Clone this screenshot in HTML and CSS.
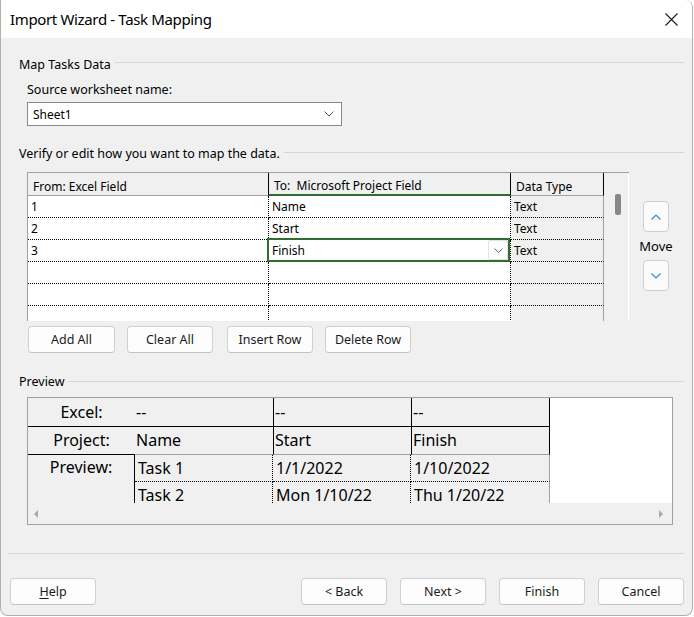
FILE: index.html
```html
<!DOCTYPE html>
<html>
<head>
<meta charset="utf-8">
<title>Import Wizard - Task Mapping</title>
<link rel="stylesheet" href="styles.css">
</head>
<body>
<div class="window">
  <div class="titlebar">
    <span class="title">Import Wizard - Task Mapping</span>
    <svg class="close" width="13" height="13" viewBox="0 0 13 13"><path d="M0.5 0.5L12.5 12.5M12.5 0.5L0.5 12.5" stroke="#1a1a1a" stroke-width="1.1" fill="none"/></svg>
  </div>

  <div class="content">
    <div class="group-head g-map"><span class="gh-text">Map Tasks Data</span><div class="rule"></div></div>
    <div class="indent">
      <div class="field-label">Source worksheet name:</div>
      <div class="combo">
        <span>Sheet1</span>
        <svg class="combo-chev" width="10" height="6" viewBox="0 0 10 6"><path d="M0.5 0.5L5 5L9.5 0.5" stroke="#555" stroke-width="1" fill="none"/></svg>
      </div>
    </div>

    <div class="group-head g-verify"><span class="gh-text">Verify or edit how you want to map the data.</span><div class="rule"></div></div>

    <div class="map-row">
      <div class="grid">
        <div class="grid-table">
          <div class="row head">
            <div class="c c1">From: Excel Field</div>
            <div class="c c2 sel-col">To:&nbsp; Microsoft Project Field</div>
            <div class="c c3">Data Type</div>
          </div>
          <div class="row">
            <div class="c c1">1</div>
            <div class="c c2">Name</div>
            <div class="c c3">Text</div>
          </div>
          <div class="row">
            <div class="c c1">2</div>
            <div class="c c2">Start</div>
            <div class="c c3">Text</div>
          </div>
          <div class="row">
            <div class="c c1">3</div>
            <div class="c c2 active">Finish
              <span class="cell-drop"><svg width="9" height="5" viewBox="0 0 9 5"><path d="M0.5 0.5L4.5 4.5L8.5 0.5" stroke="#666" stroke-width="1" fill="none"/></svg></span>
            </div>
            <div class="c c3">Text</div>
          </div>
          <div class="row"><div class="c c1"></div><div class="c c2"></div><div class="c c3"></div></div>
          <div class="row"><div class="c c1"></div><div class="c c2"></div><div class="c c3"></div></div>
          <div class="row"><div class="c c1"></div><div class="c c2"></div><div class="c c3"></div></div>
        </div>
        <div class="vscroll"><div class="thumb"></div></div>
      </div>
      <div class="move">
        <button class="move-btn up"><svg width="10" height="6" viewBox="0 0 10 6"><path d="M0.5 5.5L5 1L9.5 5.5" stroke="#2f88d8" stroke-width="1.2" fill="none"/></svg></button>
        <div class="move-label">Move</div>
        <button class="move-btn down"><svg width="10" height="6" viewBox="0 0 10 6"><path d="M0.5 0.5L5 5L9.5 0.5" stroke="#2f88d8" stroke-width="1.2" fill="none"/></svg></button>
      </div>
    </div>

    <div class="grid-buttons">
      <button class="btn">Add All</button>
      <button class="btn">Clear All</button>
      <button class="btn">Insert Row</button>
      <button class="btn">Delete Row</button>
    </div>

    <div class="group-head g-preview"><span class="gh-text">Preview</span><div class="rule"></div></div>

    <div class="preview">
      <div class="pv-area">
        <div class="pv-table">
          <div class="pv lbl r-ex">Excel:</div>
          <div class="pv v r-ex">--</div>
          <div class="pv v r-ex b-l">--</div>
          <div class="pv v r-ex b-l last">--</div>

          <div class="pv lbl r-pj lbl-pj">Project:</div>
          <div class="pv v r-pj">Name</div>
          <div class="pv v r-pj b-l">Start</div>
          <div class="pv v r-pj b-l last">Finish</div>

          <div class="pv lbl r-pv">Preview:</div>
          <div class="pv t t1 d-r">Task 1</div>
          <div class="pv t t1 d-r">1/1/2022</div>
          <div class="pv t t1 g-r">1/10/2022</div>
          <div class="pv t t2 d-r">Task 2</div>
          <div class="pv t t2 d-r">Mon 1/10/22</div>
          <div class="pv t t2 g-r">Thu 1/20/22</div>
        </div>
        <div class="pv-blank"></div>
      </div>
      <div class="hscroll">
        <span class="arr-left"></span>
        <span class="arr-right"></span>
      </div>
    </div>
  </div>

  <div class="footer">
    <div class="footer-rule"></div>
    <div class="footer-buttons">
      <button class="btn fbtn"><u>H</u>elp</button>
      <div class="nav">
        <button class="btn fbtn">&lt; Back</button>
        <button class="btn fbtn">Next &gt;</button>
        <button class="btn fbtn">Finish</button>
        <button class="btn fbtn">Cancel</button>
      </div>
    </div>
  </div>
</div>
</body>
</html>
```

FILE: styles.css
```css
* { box-sizing: border-box; }
html, body { margin: 0; padding: 0; }
body {
  width: 694px;
  height: 617px;
  overflow: hidden;
  background: #ffffff;
  font-family: "Noto Sans", "Open Sans", sans-serif;
  font-size: 12px;
  color: #000;
}
.window {
  width: 693px;
  height: 616px;
  background: #f0f0f0;
  border: 1px solid #b0b0b0;
  border-top: none;
  border-radius: 0 8px 8px 8px;
  overflow: hidden;
}
.titlebar {
  height: 38px;
  background: #fff;
  display: flex;
  align-items: center;
  justify-content: space-between;
  padding: 0 14px 0 9px;
}
.title { font-size: 15px; line-height: 20px; letter-spacing: -0.35px; }
.close { display: block; }

.content { padding: 0 8px 0 18px; }

.group-head { display: flex; height: 18px; line-height: 18px; font-size: 12.5px; }
.gh-text { white-space: nowrap; }
.rule { flex: 1; height: 1px; background: #d6d6d6; margin: 6px 0 0 4px; }
.g-map { margin-top: 18px; }
.g-verify { margin-top: 19px; }
.g-verify .rule { margin-top: 7px; }
.g-preview { margin-top: 20px; }
.g-preview .rule { margin-top: 8px; }

.indent { padding-left: 8px; }
.field-label { margin-top: 7px; height: 18px; line-height: 18px; font-size: 12.5px; }
.combo {
  margin-top: 3px;
  width: 315px;
  height: 24px;
  background: #fff;
  border: 1px solid #8a8a8a;
  display: flex;
  align-items: center;
  justify-content: space-between;
  padding: 0 7px 0 5px;
}
.combo-chev { display: block; }

.map-row { display: flex; margin-top: 9px; margin-left: 8px; }
.grid {
  display: flex;
  height: 149px;
  border-top: 1px solid #a0a0a0;
  border-left: 1px solid #a0a0a0;
  overflow: hidden;
  background: #fff;
}
.grid-table { width: 576px; }
.row { display: flex; height: 22px; }
.row .c {
  height: 22px;
  line-height: 21px;
  padding-left: 3px;
  border-right: 1px dotted #000;
  border-bottom: 1px dotted #000;
  white-space: nowrap;
}
.c1 { width: 241px; }
.c2 { width: 242px; position: relative; }
.row .c3 { width: 93px; background: #f0f0f0; border-right: 1px solid #a0a0a0; }
.row.head { height: 23px; }
.row.head .c {
  height: 23px;
  line-height: 27px;
  padding-left: 5px;
  background: #f0f0f0;
  border-right: 1px solid #000;
  border-bottom: 1px solid #a0a0a0;
  overflow: hidden;
}
.row.head .c3 { border-right: 1px solid #000; }
.row.head .sel-col { border-bottom: 2px solid #2e6e31; line-height: 26px; }
.active::after {
  content: "";
  position: absolute;
  top: -2px;
  left: -2px;
  right: 0;
  bottom: -1px;
  border: 2px solid #2e6e31;
  pointer-events: none;
}
.cell-drop {
  position: absolute;
  right: 2px;
  top: 0;
  width: 20px;
  height: 20px;
  background: #fff;
  border: 1px solid #e3e3e3;
  border-radius: 2px;
  display: flex;
  align-items: center;
  justify-content: center;
}
.cell-drop svg { display: block; }
.vscroll {
  width: 25px;
  background: #f0f0f0;
  border-right: 1px solid #fff;
  padding: 21px 0 0 11px;
}
.thumb { width: 6px; height: 21px; background: #878787; border-radius: 2px; }

.move {
  width: 40px;
  margin-left: 7px;
  display: flex;
  flex-direction: column;
  align-items: center;
  padding-top: 29px;
}
.move-btn {
  width: 26px;
  height: 31px;
  padding: 0;
  background: #fbfbfb;
  border: 1px solid #cfcfcf;
  border-radius: 4px;
  display: flex;
  align-items: center;
  justify-content: center;
}
.move-btn svg { display: block; }
.move-label { font-size: 13px; height: 28px; line-height: 28px; }

.btn {
  font-family: "Noto Sans", "Open Sans", sans-serif;
  font-size: 12.5px;
  color: #1a1a1a;
  background: #fdfdfd;
  border: 1px solid #d0d0d0;
  border-bottom-color: #c2c2c2;
  border-radius: 4px;
  height: 27px;
  width: 86px;
  padding: 0;
}
.grid-buttons { display: flex; gap: 12px; margin-top: 5px; margin-left: 9px; }
.grid-buttons .btn:first-child { width: 87px; }
.grid-buttons .btn:nth-child(2) { margin-right: 2px; }

.preview {
  margin-top: 6px;
  margin-left: 8px;
  width: 646px;
  height: 128px;
  border: 1px solid #a0a0a0;
  background: #fff;
}
.pv-area { display: flex; height: 105px; overflow: hidden; }
.pv-table {
  display: grid;
  grid-template-columns: 107px 138px 138px 139px;
  grid-template-rows: 29px 28px 27px 27px;
  background: #f0f0f0;
  font-size: 16px;
}
.pv-blank { flex: 1; background: #fff; }
.pv { white-space: nowrap; }
.lbl { text-align: center; }
.v { padding-left: 1px; }
.r-ex { border-bottom: 1px solid #000; line-height: 28px; }
.r-pj { border-bottom: 1px solid #a0a0a0; line-height: 27px; }
.lbl-pj { border-bottom: 1px solid #000; }
.b-l { border-left: 1px solid #000; }
.last { border-right: 1px solid #000; }
.r-pv { grid-row: 3 / span 2; border-right: 1px solid #000; line-height: 24px; }
.t { padding-left: 3px; line-height: 27px; }
.t1 { border-bottom: 1px dotted #000; }
.d-r { border-right: 1px dotted #000; }
.g-r { border-right: 1px solid #a0a0a0; }

.hscroll {
  height: 21px;
  background: #f0f0f0;
  display: flex;
  align-items: center;
  justify-content: space-between;
  padding: 0 9px 0 6px;
}
.arr-left, .arr-right { width: 0; height: 0; border-top: 4px solid transparent; border-bottom: 4px solid transparent; }
.arr-left { border-right: 4px solid #a8a8a8; }
.arr-right { border-left: 4px solid #a8a8a8; }

.footer { padding: 0 8px 0 7px; }
.footer-rule { margin-top: 28px; height: 1px; background: #d6d6d6; }
.footer-buttons { display: flex; justify-content: space-between; margin-top: 24px; padding-left: 2px; }
.nav { display: flex; gap: 13px; }
.fbtn u { text-decoration: underline; text-underline-offset: 2px; }
```
